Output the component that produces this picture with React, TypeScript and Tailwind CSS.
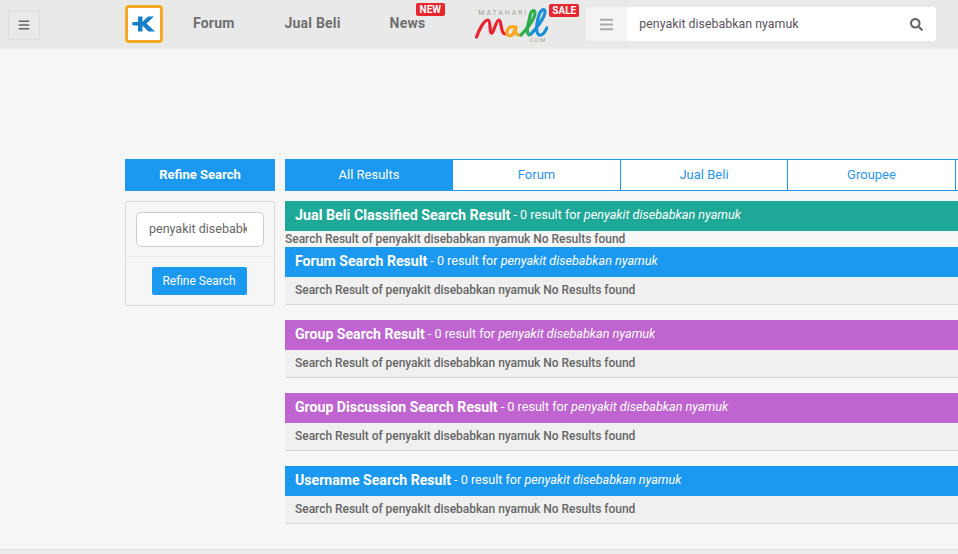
import { FaBars, FaSearch } from "react-icons/fa";

const query = "penyakit disebabkan nyamuk";

const tabs = [
  { label: "Forum", width: "w-[168px]" },
  { label: "Jual Beli", width: "w-[167px]" },
  { label: "Groupee", width: "w-[168px]" },
];

const sections = [
  { title: "Forum Search Result", color: "bg-[#1b98f0]" },
  { title: "Group Search Result", color: "bg-[#c064d1]" },
  { title: "Group Discussion Search Result", color: "bg-[#c064d1]" },
  { title: "Username Search Result", color: "bg-[#1b98f0]" },
];

const KaskusLogo = () => (
  <div className="flex h-[38px] w-[38px] items-center justify-center rounded-[4px] border-[3px] border-[#f9a825] bg-white">
    <svg width="24" height="18" viewBox="0 0 24 18" fill="#1580c8">
      <rect x="0" y="7" width="8" height="3.6" rx="1.8" />
      <path d="M6 1.5h4.5v5.2L16 1.5h6l-7.5 7L23 16.5h-6.5l-6-6v6H6z" />
    </svg>
  </div>
);

const MallLogo = () => (
  <div className="relative h-[42px] w-[73px] shrink-0">
    <span className="absolute left-[3px] top-[5px] text-[7px] leading-[9px] tracking-[1.9px] text-[#a89f92]">MATAHARI</span>
    <svg width="73" height="42" viewBox="0 0 73 42" fill="none" strokeWidth="3.2" strokeLinecap="round" strokeLinejoin="round" className="absolute left-0 top-0">
      <path d="M1.5 33C4 26 9 16 13 16c3 0 1 14 4 13 2-1 4-13 7-13 3 0 1 13 6 14" stroke="#e8232f" />
      <path d="M41 24c-3-3-8-1-9 3-1 5 4 6 6 3l3-7c-1 3-1 8 3 8" stroke="#f7a823" />
      <path d="M46 31c5-5 14-16 14-22 0-4-4-3-5 3-1 6-5 16-1 19" stroke="#2eae4a" />
      <path d="M56 30c5-5 14-17 14-22 0-4-4-3-6 3-2 7-4 17 0 20 3 1 6-3 8-7" stroke="#1b8ed8" />
    </svg>
    <span className="absolute left-[52px] top-[32px] text-[6px] leading-[8px] tracking-[1px] text-[#a89f92]">.COM</span>
  </div>
);

const Header = () => (
  <header className="flex h-[49px] items-center bg-[#e9e9e9]">
    <button className="ml-2 flex h-[30px] w-8 items-center justify-center rounded-[1px] border border-[#dcdcdc] text-[#666]">
      <FaBars className="text-[12px]" />
    </button>
    <div className="mb-px ml-[85px]">
      <KaskusLogo />
    </div>
    <a className="mb-[2px] ml-[30px] text-[14px] font-bold tracking-[0.2px] text-[#6f6f6f]">Forum</a>
    <a className="mb-[2px] ml-[50px] text-[14px] font-bold tracking-[0.2px] text-[#6f6f6f]">Jual Beli</a>
    <a className="relative mb-[2px] ml-[49px] text-[14px] font-bold tracking-[0.2px] text-[#6f6f6f]">
      News
      <span className="absolute -top-[10px] left-[26px] rounded-[2px] bg-[#e8262d] px-[4px] text-[10px] font-bold leading-[13px] tracking-normal text-white">NEW</span>
    </a>
    <div className="relative ml-[50px]">
      <MallLogo />
      <span className="absolute left-[74px] top-[0px] rounded-[2px] bg-[#e8262d] px-[3px] text-[10px] font-bold leading-[13px] text-white">SALE</span>
    </div>
    <div className="mb-px ml-[38px] flex h-[34px] w-[350px] rounded-[3px] bg-[#f4f4f4]">
      <div className="flex w-[41px] items-center justify-center text-[#aaa]">
        <FaBars className="text-[15px]" />
      </div>
      <div className="flex flex-1 items-center justify-between rounded-r-[3px] bg-white pl-3 pr-[13px]">
        <span className="text-[12.4px] text-[#5d5560]">{query}</span>
        <FaSearch className="text-[13px] text-[#666]" />
      </div>
    </div>
  </header>
);

const Sidebar = () => (
  <aside className="w-[150px] shrink-0">
    <div className="flex h-8 items-center justify-center bg-[#1b98f0] text-[13px] font-bold text-white">Refine Search</div>
    <div className="mt-[10px] h-[105px] rounded-[2px] border border-[#d9d9d9]">
      <div className="flex h-[55px] items-center justify-center border-b border-[#ececec]">
        <div className="flex h-[35px] w-[128px] items-center overflow-hidden whitespace-nowrap rounded-[5px] border border-[#ccc] bg-white pl-3 pr-4 text-[12.5px] text-[#666]">
          <span className="block w-full overflow-hidden">{query}</span>
        </div>
      </div>
      <div className="flex justify-center pr-[2px] pt-[10px]">
        <button className="h-7 w-[95px] rounded-[2px] bg-[#1b98f0] text-[12px] text-white">Refine Search</button>
      </div>
    </div>
  </aside>
);

const ResultTitle = ({ title, color, titleSize = "text-[14.1px]" }: { title: string; color: string; titleSize?: string }) => (
  <div className={`flex h-[30px] items-center whitespace-pre pb-px pl-[10px] text-white ${color}`}>
    <span className={`font-bold ${titleSize}`}>{title}</span>
    <span className="text-[12.6px]"> - 0 result for </span>
    <em className="text-[12.6px]">{query}</em>
  </div>
);

const emptyText = `Search Result of ${query} No Results found`;

const Results = () => (
  <main className="w-[700px] shrink-0">
    <nav className="flex h-8">
      <div className="flex w-[168px] items-center justify-center bg-[#1b98f0] text-[13px] text-white">All Results</div>
      {tabs.map((tab) => (
        <div key={tab.label} className={`flex items-center justify-center border-y border-r border-[#1b98f0] bg-white text-[13px] text-[#2b96ee] ${tab.width}`}>
          {tab.label}
        </div>
      ))}
      <div className="w-[29px] border-y border-[#1b98f0] bg-white" />
    </nav>

    <div className="mt-[10px]">
      <ResultTitle title="Jual Beli Classified Search Result" color="bg-[#1ea897]" titleSize="text-[14.3px]" />
      <p className="h-4 text-[12px] font-medium leading-4 tracking-[-0.03px] text-[#666]">{emptyText}</p>
    </div>

    <div className="flex flex-col gap-[15px]">
      {sections.map((section) => (
        <section key={section.title}>
          <ResultTitle title={section.title} color={section.color} />
          <p className="h-[28px] border-b border-[#d6d6d6] bg-[#f0f0f0] pl-[10px] text-[12px] font-medium leading-[27px] tracking-[-0.03px] text-[#666]">{emptyText}</p>
        </section>
      ))}
    </div>
  </main>
);

export default function App() {
  return (
    <div className="flex h-[554px] flex-col overflow-hidden bg-[#f6f6f6] font-['Roboto',sans-serif]">
      <Header />
      <div className="flex flex-1 gap-[10px] pl-[125px] pt-[110px]">
        <Sidebar />
        <Results />
      </div>
      <div className="h-[5px] border-t border-[#dedede] bg-[#ececec]" />
    </div>
  );
}
